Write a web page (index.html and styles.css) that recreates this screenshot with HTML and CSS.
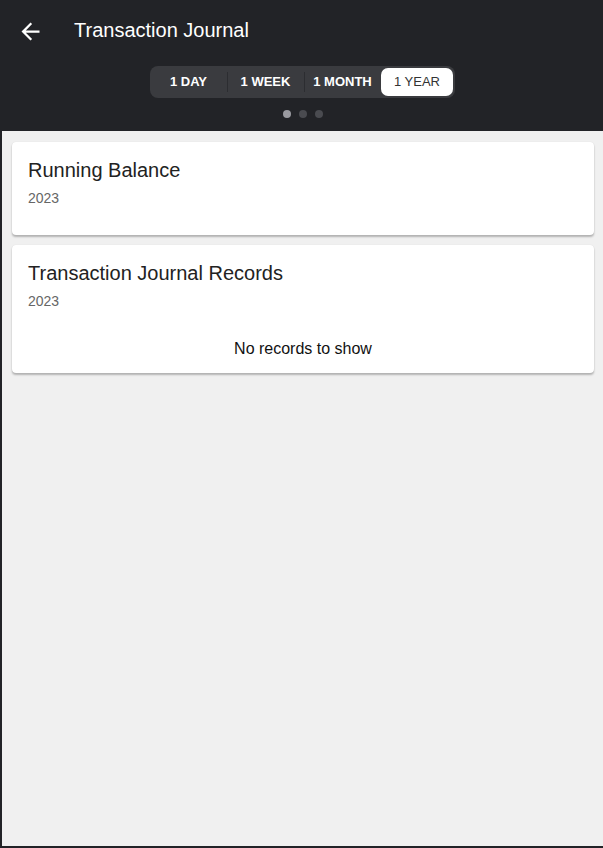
FILE: index.html
```html
<!doctype html>
<html lang="en">
<head>
    <meta charset="UTF-8">
    <meta name="viewport" content="width=device-width, initial-scale=1.0">
    <title>Transaction Journal</title>
    <link rel="stylesheet" href="styles.css">
</head>
<body>
<div class="app">
    <header class="toolbar">
        <div class="title-row">
            <button class="back" aria-label="Back">
                <svg width="27" height="27" viewBox="0 0 24 24">
                    <path d="M20 11H7.83l5.59-5.59L12 4l-8 8 8 8 1.41-1.41L7.83 13H20v-2z" fill="#fff"/>
                </svg>
            </button>
            <h1>Transaction Journal</h1>
        </div>
        <div class="segments">
            <span class="seg">1 DAY</span>
            <span class="seg">1 WEEK</span>
            <span class="seg">1 MONTH</span>
            <span class="seg active">1 YEAR</span>
        </div>
        <div class="dots">
            <i class="dot on"></i><i class="dot"></i><i class="dot"></i>
        </div>
    </header>

    <main class="content">
        <section class="card">
            <h2>Running Balance</h2>
            <p class="sub">2023</p>
        </section>
        <section class="card">
            <h2>Transaction Journal Records</h2>
            <p class="sub">2023</p>
            <p class="empty">No records to show</p>
        </section>
    </main>
</div>
</body>
</html>
```

FILE: styles.css
```css
* {
    margin: 0;
    padding: 0;
    box-sizing: border-box;
}

html, body {
    height: 100%;
}

body {
    font-family: "Liberation Sans", Arial, sans-serif;
    background: #222327;
}

.app {
    height: 100%;
    border-left: 2px solid #222327;
    border-bottom: 2px solid #222327;
    display: flex;
    flex-direction: column;
    background: #f0f0f0;
}

.toolbar {
    background: #222327;
    height: 131px;
    padding-top: 16px;
}

.title-row {
    display: flex;
    align-items: center;
    height: 30px;
    padding-left: 15px;
}

.back {
    background: none;
    border: 0;
    width: 27px;
    height: 27px;
    display: flex;
}

h1 {
    color: #fff;
    font-size: 20px;
    font-weight: normal;
    margin-left: 30px;
    margin-top: -1px;
}

.segments {
    width: 305px;
    height: 32px;
    margin: 20px auto 0;
    background: #3a3b3f;
    border-radius: 8px;
    display: flex;
    align-items: center;
    padding: 0 2px 0 0;
}

.seg {
    flex: none;
    color: #fff;
    font-size: 13px;
    font-weight: bold;
    text-align: center;
    line-height: 28px;
    position: relative;
}

.seg:nth-child(1) { width: 77px; }
.seg:nth-child(2) { width: 77px; }
.seg:nth-child(3) { width: 77px; }

.seg:nth-child(2)::before,
.seg:nth-child(3)::before {
    content: "";
    position: absolute;
    left: 0;
    top: 4px;
    height: 20px;
    border-left: 1px solid #2c2d31;
}

.seg.active {
    width: 72px;
    background: #fff;
    color: #333;
    font-weight: normal;
    border-radius: 7px;
}

.dots {
    display: flex;
    justify-content: center;
    gap: 8px;
    margin-top: 12px;
}

.dot {
    width: 8px;
    height: 8px;
    border-radius: 50%;
    background: #4a4b50;
}

.dot.on {
    background: #9a9aa0;
}

.content {
    flex: 1;
    padding: 11px 9px 0 10px;
    display: flex;
    flex-direction: column;
    gap: 10px;
}

.card {
    background: #fff;
    border-radius: 4px;
    box-shadow: 0 2px 2px rgba(0, 0, 0, 0.25), 0 0 1px rgba(0, 0, 0, 0.12);
    padding: 16px 16px 0;
}

.card:first-child {
    height: 93px;
}

h2 {
    font-size: 20px;
    font-weight: normal;
    color: #222;
    line-height: 24px;
}

.sub {
    font-size: 14px;
    color: #666;
    margin-top: 8px;
}

.empty {
    text-align: center;
    font-size: 16px;
    color: #111;
    margin-top: 31px;
    padding-bottom: 15px;
}
```
